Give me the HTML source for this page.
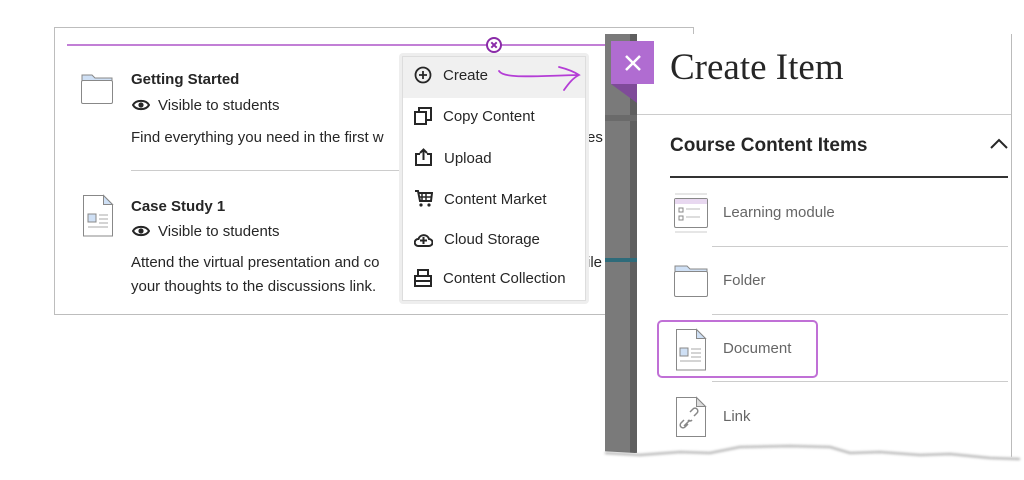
<!DOCTYPE html>
<html><head><meta charset="utf-8"><style>
body{margin:0;width:1024px;height:480px;background:#fff;position:relative;overflow:hidden;font-family:"Liberation Sans",sans-serif;color:#262626}
.a{position:absolute;white-space:nowrap}
</style></head><body>
<div class="a" style="left:54px;top:27px;width:640px;height:288px;border:1px solid #bdbdbd;box-sizing:border-box"></div>
<div class="a" style="left:67px;top:44px;width:540px;height:2px;background:#c27fd6"></div>
<svg class="a" style="left:485px;top:36px" width="18" height="18" viewBox="0 0 18 18"><circle cx="9" cy="9" r="7" fill="#fff" stroke="#8a2ba8" stroke-width="2"/><path d="M6.3 6.3l5.4 5.4M11.7 6.3l-5.4 5.4" stroke="#8a2ba8" stroke-width="2"/></svg>

<svg class="a" style="left:80px;top:72px" width="34" height="34" viewBox="0 0 34 34"><path d="M2 3h10l3 3h17v5H2z" fill="#cfe0f5" stroke="#888"/><rect x="1.5" y="8.5" width="31" height="23" rx="1.5" fill="#fff" stroke="#888"/></svg>
<div class="a" style="left:131px;top:71px;font-size:15px;font-weight:bold">Getting Started</div>
<svg class="a" style="left:132px;top:98px" width="18" height="14" viewBox="0 0 18 14"><path d="M1 7C4 1.5 14 1.5 17 7 14 12.5 4 12.5 1 7z" fill="none" stroke="#262626" stroke-width="2"/><circle cx="9" cy="7" r="2.6" fill="#262626"/></svg>
<div class="a" style="left:158px;top:97px;font-size:15px">Visible to students</div>
<div class="a" style="left:131px;top:129px;font-size:15px">Find everything you need in the first w</div>
<div class="a" style="left:587px;top:129px;font-size:15px">es</div>
<div class="a" style="left:131px;top:170px;width:270px;height:1px;background:#ccc"></div>

<svg class="a" style="left:82px;top:194px" width="32" height="44" viewBox="0 0 32 44"><path d="M1.5 1.5h20l9 9v31.5h-29z" fill="#fff" stroke="#888"/><path d="M21.5 1.5v9h9z" fill="#cfe0f5" stroke="#888"/><rect x="6" y="20" width="8" height="8" fill="#cfe0f5" stroke="#888"/><path d="M17 21h9M17 25h9M17 29h9M6 33h20" stroke="#aaa"/></svg>
<div class="a" style="left:131px;top:198px;font-size:15px;font-weight:bold">Case Study 1</div>
<svg class="a" style="left:132px;top:224px" width="18" height="14" viewBox="0 0 18 14"><path d="M1 7C4 1.5 14 1.5 17 7 14 12.5 4 12.5 1 7z" fill="none" stroke="#262626" stroke-width="2"/><circle cx="9" cy="7" r="2.6" fill="#262626"/></svg>
<div class="a" style="left:158px;top:223px;font-size:15px">Visible to students</div>
<div class="a" style="left:131px;top:254px;font-size:15px">Attend the virtual presentation and co</div>
<div class="a" style="left:587px;top:254px;font-size:15px">ile</div>
<div class="a" style="left:131px;top:278px;font-size:15px">your thoughts to the discussions link.</div>

<div class="a" style="left:399px;top:53px;width:190px;height:251px;background:#eee;border-radius:4px"></div>
<div class="a" style="left:402px;top:56px;width:184px;height:245px;background:#fff;border:1px solid #ddd;box-sizing:border-box"></div>
<div class="a" style="left:403px;top:57px;width:182px;height:41px;background:#f0f0f0"></div>
<svg class="a" style="left:414px;top:66px" width="18" height="18" viewBox="0 0 18 18"><circle cx="9" cy="9" r="7.5" fill="none" stroke="#262626" stroke-width="1.8"/><path d="M9 5v8M5 9h8" stroke="#262626" stroke-width="1.8"/></svg>
<div class="a" style="left:443px;top:67px;font-size:15px">Create</div>
<svg class="a" style="left:497px;top:66px" width="90" height="30" viewBox="0 0 90 30"><path d="M2 5c5 8 35 5 80 4M62 1c8 2 14 4 20 8-6 3-10 8-15 15" fill="none" stroke="#b43dd6" stroke-width="1.8" stroke-linecap="round"/></svg>
<svg class="a" style="left:414px;top:107px" width="18" height="18" viewBox="0 0 18 18"><rect x="1" y="5" width="11" height="12" fill="none" stroke="#262626" stroke-width="2"/><path d="M5 5V1h12v12h-5" fill="none" stroke="#262626" stroke-width="2"/></svg>
<div class="a" style="left:443px;top:108px;font-size:15px">Copy Content</div>
<svg class="a" style="left:414px;top:148px" width="19" height="18" viewBox="0 0 19 18"><path d="M6 6H2v11h15V6h-4M9.5 12V2M6 5l3.5-3.5L13 5" fill="none" stroke="#262626" stroke-width="2"/></svg>
<div class="a" style="left:444px;top:150px;font-size:15px">Upload</div>
<svg class="a" style="left:414px;top:189px" width="19" height="19" viewBox="0 0 19 19"><path d="M1 2h3l2 10h11l1-8H5" fill="none" stroke="#262626" stroke-width="2"/><path d="M8 5v7M12 5v7M5 8h13" stroke="#262626" stroke-width="1.5"/><circle cx="7" cy="16" r="1.6" fill="#262626"/><circle cx="15" cy="16" r="1.6" fill="#262626"/></svg>
<div class="a" style="left:444px;top:191px;font-size:15px">Content Market</div>
<svg class="a" style="left:414px;top:230px" width="19" height="18" viewBox="0 0 19 18"><path d="M4 16h11a3.5 3.5 0 0 0 0-7 5.5 5.5 0 0 0-10.5 0A3.5 3.5 0 0 0 4 16z" fill="none" stroke="#262626" stroke-width="2"/><path d="M9.5 7v7M6 10.5h7" stroke="#262626" stroke-width="2"/></svg>
<div class="a" style="left:444px;top:231px;font-size:15px">Cloud Storage</div>
<svg class="a" style="left:414px;top:268px" width="18" height="19" viewBox="0 0 18 19"><path d="M4 8V2h10v6M1 8h16v10H1zM1 13h16" fill="none" stroke="#262626" stroke-width="2"/></svg>
<div class="a" style="left:443px;top:270px;font-size:15px">Content Collection</div>

<div class="a" style="left:605px;top:34px;width:32px;height:430px;background:#7a7a7a"></div>
<div class="a" style="left:630px;top:34px;width:7px;height:430px;background:#5f5f5f"></div>
<div class="a" style="left:605px;top:115px;width:32px;height:6px;background:#6a6a6a"></div>
<div class="a" style="left:605px;top:258px;width:32px;height:4px;background:#2e6b7a"></div>
<div class="a" style="left:637px;top:34px;width:375px;height:430px;background:#fff;border-right:1px solid #bbb;box-sizing:border-box"></div>
<div class="a" style="left:611px;top:41px;width:43px;height:43px;background:#b06cd1"></div>
<svg class="a" style="left:611px;top:84px" width="26" height="20"><path d="M0 0h26v19z" fill="#7f4b99"/></svg>
<svg class="a" style="left:624px;top:54px" width="18" height="18"><path d="M2 2l14 14M16 2L2 16" stroke="#fff" stroke-width="2.5"/></svg>
<div class="a" style="left:670px;top:46px;font-family:'Liberation Serif',serif;font-size:37px;color:#262626">Create Item</div>
<div class="a" style="left:637px;top:114px;width:374px;height:1px;background:#ccc"></div>
<div class="a" style="left:670px;top:135px;font-size:19px;font-weight:bold">Course Content Items</div>
<svg class="a" style="left:989px;top:137px" width="20" height="14"><path d="M2 11l8-8 8 8" fill="none" stroke="#262626" stroke-width="2"/></svg>
<div class="a" style="left:670px;top:176px;width:338px;height:2px;background:#333"></div>

<svg class="a" style="left:673px;top:192px" width="36" height="42" viewBox="0 0 36 42"><path d="M2 2h32M2 40h32" stroke="#ccc"/><rect x="1.5" y="6.5" width="33" height="29" rx="1.5" fill="#fff" stroke="#888"/><rect x="2" y="7" width="32" height="5" fill="#e8d8f0"/><path d="M6 16h4v4H6zM6 24h4v4H6z" fill="none" stroke="#888"/><path d="M13 17h14M13 25h14" stroke="#bbb"/></svg>
<div class="a" style="left:723px;top:204px;font-size:15px;color:#666">Learning module</div>
<div class="a" style="left:712px;top:246px;width:296px;height:1px;background:#ccc"></div>
<svg class="a" style="left:673px;top:263px" width="36" height="36" viewBox="0 0 36 36"><path d="M2 3h12l3 3h17v5H2z" fill="#cfe0f5" stroke="#888"/><rect x="1.5" y="8.5" width="33" height="25" rx="1.5" fill="#fff" stroke="#888"/></svg>
<div class="a" style="left:723px;top:272px;font-size:15px;color:#666">Folder</div>
<div class="a" style="left:712px;top:314px;width:296px;height:1px;background:#ccc"></div>
<div class="a" style="left:657px;top:320px;width:161px;height:58px;border:2px solid #c070d6;border-radius:5px;box-sizing:border-box"></div>
<svg class="a" style="left:675px;top:328px" width="32" height="44" viewBox="0 0 32 44"><path d="M1.5 1.5h20l9 9v31.5h-29z" fill="#fff" stroke="#888"/><path d="M21.5 1.5v9h9z" fill="#cfe0f5" stroke="#888"/><rect x="5" y="20" width="8" height="8" fill="#cfe0f5" stroke="#888"/><path d="M16 21h10M16 25h10M16 29h10M5 33h21" stroke="#aaa"/></svg>
<div class="a" style="left:723px;top:340px;font-size:15px;color:#666">Document</div>
<div class="a" style="left:712px;top:381px;width:296px;height:1px;background:#ccc"></div>
<svg class="a" style="left:675px;top:396px" width="32" height="42" viewBox="0 0 32 42"><path d="M1.5 1.5h20l9 9v30h-29z" fill="#fff" stroke="#888"/><path d="M21.5 1.5v9h9z" fill="#ddd" stroke="#888"/><path d="M9 30l6-6M13 28l-3 3a2.5 2.5 0 0 1-4-4l3-3M19 20l3-3a2.5 2.5 0 0 0-4-4l-3 3m-2 8a2.5 2.5 0 0 0 4 0" fill="none" stroke="#888" stroke-width="1.5"/></svg>
<div class="a" style="left:723px;top:408px;font-size:15px;color:#666">Link</div>
<svg class="a" style="left:600px;top:430px" width="424" height="50" viewBox="0 0 424 50"><defs><filter id="s" x="-10%" y="-100%" width="120%" height="300%"><feGaussianBlur stdDeviation="1.4"/></filter></defs><path d="M0 21l35 2 40-3 30 1 30-6 50-1 40 1 20 6 30-1 40 3 30-1 40 4 35 1V50H0z" fill="#fff"/><path d="M5 23l35 2 40-3 30 1 30-6 50-1 40 1 20 6 30-1 40 3 30-1 40 4 30 1" fill="none" stroke="#666" stroke-width="2" opacity="0.55" filter="url(#s)"/></svg>
</body></html>
